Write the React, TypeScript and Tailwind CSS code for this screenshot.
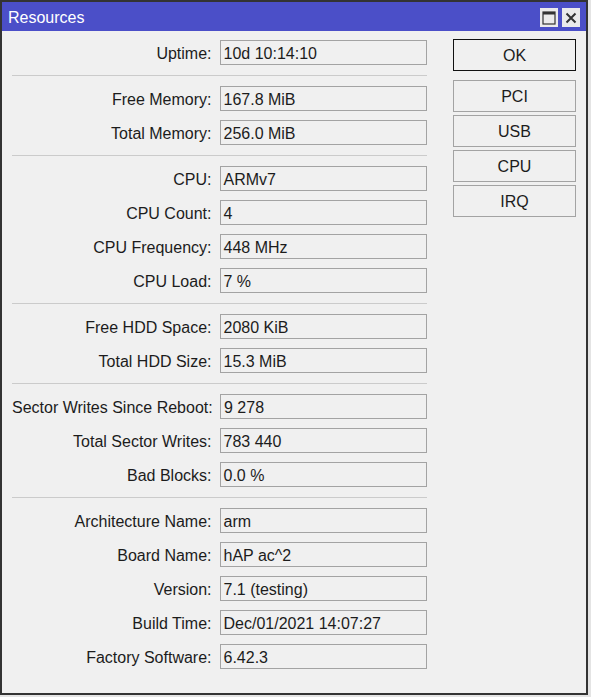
import React from "react";

type Row = { label: string; value: string };

const groups: Row[][] = [
  [{ label: "Uptime:", value: "10d 10:14:10" }],
  [
    { label: "Free Memory:", value: "167.8 MiB" },
    { label: "Total Memory:", value: "256.0 MiB" },
  ],
  [
    { label: "CPU:", value: "ARMv7" },
    { label: "CPU Count:", value: "4" },
    { label: "CPU Frequency:", value: "448 MHz" },
    { label: "CPU Load:", value: "7 %" },
  ],
  [
    { label: "Free HDD Space:", value: "2080 KiB" },
    { label: "Total HDD Size:", value: "15.3 MiB" },
  ],
  [
    { label: "Sector Writes Since Reboot:", value: "9 278" },
    { label: "Total Sector Writes:", value: "783 440" },
    { label: "Bad Blocks:", value: "0.0 %" },
  ],
  [
    { label: "Architecture Name:", value: "arm" },
    { label: "Board Name:", value: "hAP ac^2" },
    { label: "Version:", value: "7.1 (testing)" },
    { label: "Build Time:", value: "Dec/01/2021 14:07:27" },
    { label: "Factory Software:", value: "6.42.3" },
  ],
];

function Field({ label, value }: Row) {
  return (
    <div className="flex items-center h-[25px]">
      <div className="w-[201px] text-right pr-[1px] pt-[2px] whitespace-nowrap">{label}</div>
      <div className="ml-[7px] w-[208px] h-[25px] border border-[#a3a3a3] bg-[#f0f0f0] flex items-center pl-[3px] pt-[2px] whitespace-nowrap">
        {value}
      </div>
    </div>
  );
}

export default function App() {
  return (
    <div
      className="w-[591px] h-[697px] bg-[#e4e4e4] text-[16px] text-[#1c1c1c]"
      style={{ fontFamily: '"Liberation Sans", Arial, sans-serif' }}
    >
      <div className="w-[588px] h-[695px] border-2 border-[#333333] bg-[#f0f0f0] flex flex-col">
        {/* Title bar */}
        <div className="h-[29px] bg-[#4b4fc8] flex items-center justify-between pl-[6px] pr-[6px] shrink-0">
          <span className="text-white text-[16px] leading-none mt-[2px]">Resources</span>
          <div className="flex gap-[4px] mt-[2px]">
            <div className="w-[18px] h-[19px] bg-[#ebebeb] flex items-center justify-center">
              <svg width="14" height="14" viewBox="0 0 14 14">
                <rect x="1" y="1" width="12" height="12" fill="none" stroke="#333" strokeWidth="1.2" />
                <rect x="1" y="1" width="12" height="2.5" fill="#333" />
              </svg>
            </div>
            <div className="w-[18px] h-[19px] bg-[#ebebeb] flex items-center justify-center">
              <svg width="12" height="12" viewBox="0 0 12 12">
                <path d="M1.5 1.5 L10.5 10.5 M10.5 1.5 L1.5 10.5" stroke="#333" strokeWidth="2" />
              </svg>
            </div>
          </div>
        </div>

        {/* Body */}
        <div className="flex pl-[10px] pt-[9px]">
          <div className="flex flex-col w-[415px]">
            {groups.map((g, gi) => (
              <React.Fragment key={gi}>
                {gi > 0 && <div className="my-[10px] h-px bg-[#cbcbcb]" />}
                <div className="flex flex-col gap-[9px]">
                  {g.map((r) => (
                    <Field key={r.label} label={r.label} value={r.value} />
                  ))}
                </div>
              </React.Fragment>
            ))}
          </div>

          <div className="ml-[26px] flex flex-col w-[123px] -mt-[1px]">
            <button className="h-[32px] border border-[#111] bg-[#f0f0f0] text-[16px] pt-[2px]">OK</button>
            <div className="flex flex-col gap-[3px] mt-[9px]">
              {["PCI", "USB", "CPU", "IRQ"].map((b) => (
                <button key={b} className="h-[32px] border border-[#a3a3a3] bg-[#f0f0f0] text-[16px] pt-[2px]">
                  {b}
                </button>
              ))}
            </div>
          </div>
        </div>
      </div>
    </div>
  );
}
